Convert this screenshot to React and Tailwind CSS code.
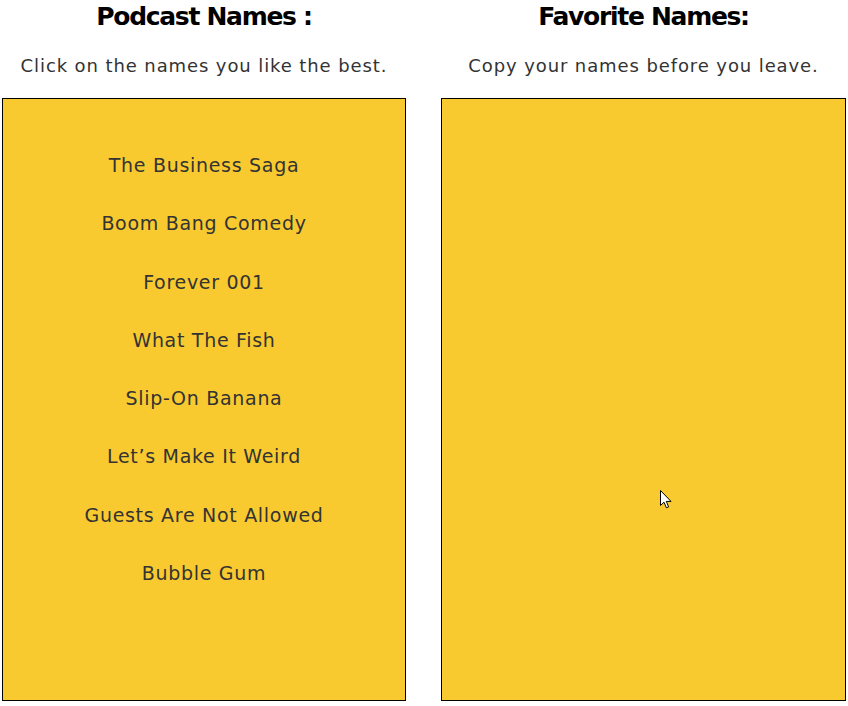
export default function App() {
  const names = [
    "The Business Saga",
    "Boom Bang Comedy",
    "Forever 001",
    "What The Fish",
    "Slip-On Banana",
    "Let’s Make It Weird",
    "Guests Are Not Allowed",
    "Bubble Gum",
  ];
  return (
    <div className="w-[848px] h-[706px] bg-white relative overflow-hidden" style={{ fontFamily: "'DejaVu Sans', sans-serif" }}>
      <div className="grid grid-cols-[404px_405px] gap-x-[35px] px-[2px]">
        <div className="flex flex-col items-center">
          <h2 className="text-[25px] leading-[34px] font-bold text-black tracking-[-1.3px]">Podcast Names :</h2>
          <p className="mt-[21px] text-[18px] leading-[22px] text-[#333] tracking-[0.9px]">Click on the names you like the best.</p>
          <div className="mt-[21px] w-full h-[603px] bg-[#f8ca2f] border border-black flex flex-col items-center pt-[55px]">
            {names.map((n) => (
              <div key={n} className="text-[19px] leading-[22px] h-[58.3px] shrink-0 text-[#333] tracking-[0.7px] cursor-pointer">{n}</div>
            ))}
          </div>
        </div>
        <div className="flex flex-col items-center">
          <h2 className="text-[25px] leading-[34px] font-bold text-black tracking-[-1.3px]">Favorite Names:</h2>
          <p className="mt-[21px] text-[18px] leading-[22px] text-[#333] tracking-[0.9px]">Copy your names before you leave.</p>
          <div className="mt-[21px] w-full h-[603px] bg-[#f8ca2f] border border-black"></div>
        </div>
      </div>
      <svg className="absolute left-[660px] top-[490px]" width="12" height="19" viewBox="0 0 12 19">
        <path d="M0.5 0.5 L0.5 15.5 L4 12.2 L6.4 17.8 L8.6 16.9 L6.3 11.4 L11 11.4 Z" fill="white" stroke="black" strokeWidth="1" />
      </svg>
    </div>
  );
}
